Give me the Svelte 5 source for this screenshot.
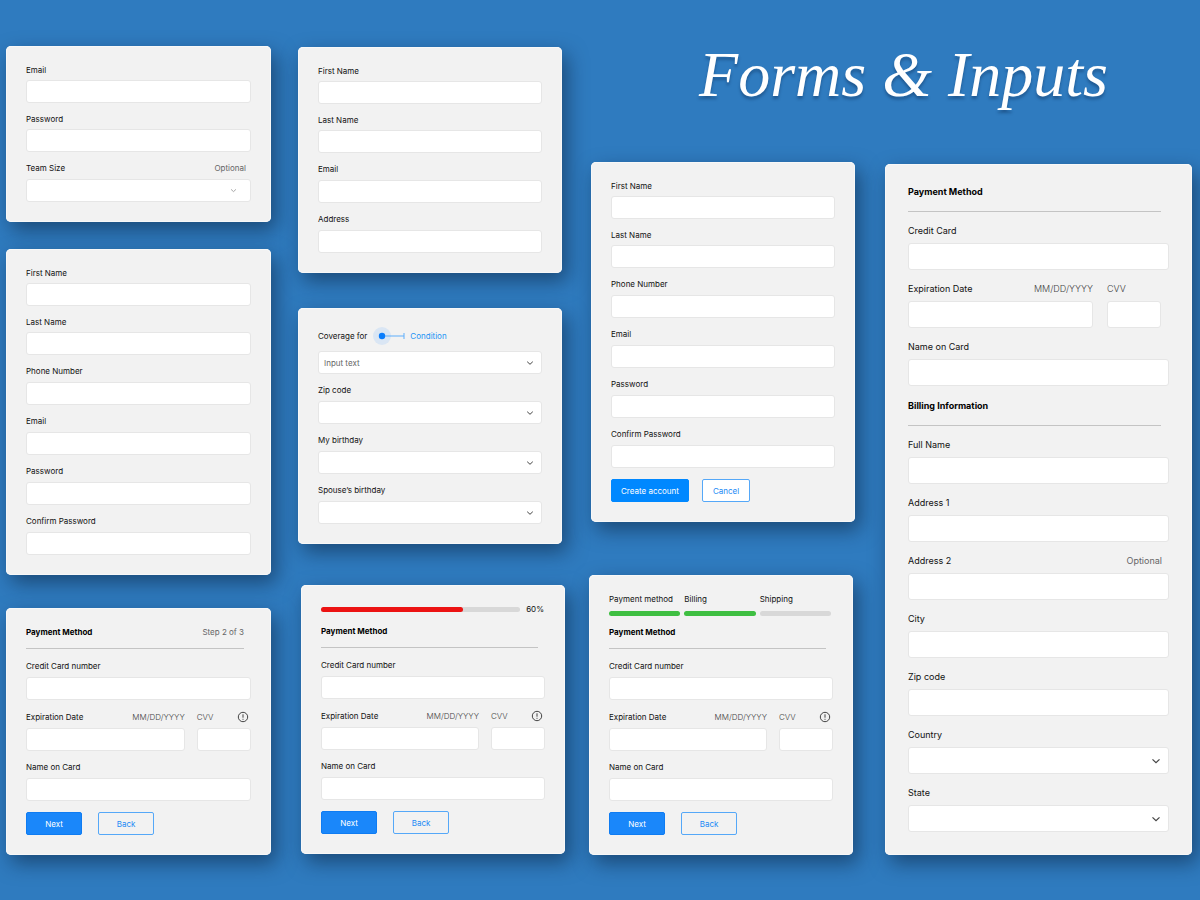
<script>
  const team = [
    { name: 'Email', type: 'email' },
    { name: 'Password', type: 'password' },
    { name: 'Team Size', select: true, hint: 'Optional', faint: true }
  ];
  const contact = [
    { name: 'First Name' },
    { name: 'Last Name' },
    { name: 'Email', type: 'email' },
    { name: 'Address' }
  ];
  const account = [
    { name: 'First Name' },
    { name: 'Last Name' },
    { name: 'Phone Number', type: 'tel' },
    { name: 'Email', type: 'email' },
    { name: 'Password', type: 'password' },
    { name: 'Confirm Password', type: 'password' }
  ];
  const coverage = [
    { name: 'Zip code', select: true },
    { name: 'My birthday', select: true },
    { name: 'Spouse’s birthday', select: true }
  ];
  const billing = [
    { name: 'Full Name' },
    { name: 'Address 1' },
    { name: 'Address 2', hint: 'Optional' },
    { name: 'City' },
    { name: 'Zip code' },
    { name: 'Country', select: true },
    { name: 'State', select: true }
  ];
  const steps = [
    { name: 'Payment method', done: true },
    { name: 'Billing', done: true },
    { name: 'Shipping', done: false }
  ];
  const progress = 71.5;

  const idOf = (prefix, name) => prefix + '-' + name.toLowerCase().replace(/[^a-z0-9]+/g, '-');
</script>

{#snippet picker(id, text, faint)}
  <div class="picker">
    <select {id}><option>{text}</option></select>
    <svg class="chevron" class:faint viewBox="0 0 8 8" aria-hidden="true">
      <path d="M1.2 2.7 L4 5.3 L6.8 2.7" />
    </svg>
  </div>
{/snippet}

{#snippet field(prefix, f)}
  {@const id = idOf(prefix, f.name)}
  <div class="field">
    <div class="caption">
      <label for={id}>{f.name}</label>
      {#if f.hint}<span class="hint">{f.hint}</span>{/if}
    </div>
    {#if f.select}
      {@render picker(id, '', f.faint)}
    {:else}
      <input {id} type={f.type ?? 'text'} />
    {/if}
  </div>
{/snippet}

{#snippet cardFields(prefix, numberLabel, info)}
  {@render field(prefix, { name: numberLabel })}
  <div class="expiry">
    <div class="field">
      <div class="caption">
        <label for="{prefix}-exp">Expiration Date</label>
        <span class="light">MM/DD/YYYY</span>
      </div>
      <input id="{prefix}-exp" type="text" />
    </div>
    <div class="field">
      <div class="caption">
        <label class="light" for="{prefix}-cvv">CVV</label>
        {#if info}
          <svg class="info" viewBox="0 0 12 12" aria-hidden="true">
            <circle cx="6" cy="6" r="4.7" />
            <path d="M6 3.3 V6.7 M6 7.8 V8.8" />
          </svg>
        {/if}
      </div>
      <input id="{prefix}-cvv" type="text" />
    </div>
  </div>
  {@render field(prefix, { name: 'Name on Card' })}
{/snippet}

{#snippet nextBack()}
  <div class="actions wide">
    <button class="primary" type="button">Next</button>
    <button class="outline" type="button">Back</button>
  </div>
{/snippet}

<main>
  <h1>Forms &amp; Inputs</h1>

  <div class="stack one">
    <form class="card list">
      {#each team as f}{@render field('team', f)}{/each}
    </form>
    <form class="card list">
      {#each account as f}{@render field('profile', f)}{/each}
    </form>
    <form class="card">
      <div class="heading">
        <h2>Payment Method</h2>
        <span class="hint">Step 2 of 3</span>
      </div>
      {@render cardFields('pay-a', 'Credit Card number', true)}
      {@render nextBack()}
    </form>
  </div>

  <div class="stack two">
    <form class="card list">
      {#each contact as f}{@render field('contact', f)}{/each}
    </form>
    <form class="card">
      <div class="field">
        <div class="caption condition">
          <label for="coverage-for">Coverage for</label>
          <svg viewBox="0 0 32 20" aria-hidden="true">
            <circle cx="9" cy="10" r="9" fill="#dae6f4" />
            <path d="M11 10 H31 M31 7 V13" fill="none" stroke="#5eaefb" />
            <circle cx="9" cy="10" r="3.2" fill="#0a7dfc" />
          </svg>
          <span>Condition</span>
        </div>
        {@render picker('coverage-for', 'Input text', false)}
      </div>
      {#each coverage as f}{@render field('coverage', f)}{/each}
    </form>
    <form class="card">
      <div class="progress">
        <div class="track"><div class="fill" style="width: {progress}%"></div></div>
        <span>60%</span>
      </div>
      <div class="heading"><h2>Payment Method</h2></div>
      {@render cardFields('pay-b', 'Credit Card number', true)}
      {@render nextBack()}
    </form>
  </div>

  <div class="stack three">
    <form class="card list">
      {#each account as f}{@render field('account', f)}{/each}
      <div class="actions">
        <button class="primary bright" type="button">Create account</button>
        <button class="outline filled" type="button">Cancel</button>
      </div>
    </form>
    <form class="card">
      <ol class="steps">
        {#each steps as s}
          <li class:done={s.done}>{s.name}</li>
        {/each}
      </ol>
      <div class="heading"><h2>Payment Method</h2></div>
      {@render cardFields('pay-c', 'Credit Card number', true)}
      {@render nextBack()}
    </form>
  </div>

  <div class="stack four">
    <form class="card large">
      <div class="heading"><h2>Payment Method</h2></div>
      {@render cardFields('full', 'Credit Card', false)}
      <div class="heading second"><h2>Billing Information</h2></div>
      {#each billing as f}{@render field('billing', f)}{/each}
    </form>
  </div>
</main>

<style>
  :global(body) {
    margin: 0;
    background: #2f7bbf;
  }
  main {
    box-sizing: border-box;
    min-height: 100vh;
    display: grid;
    grid-template-columns: 268fr 267fr 272fr 307fr;
    grid-template-rows: auto 1fr;
    column-gap: 24px;
    padding: 46px 8px 45px 6px;
    font-family: Inter, sans-serif;
    font-size: 8px;
    line-height: 16px;
    color: #111;
  }
  h1 {
    grid-column: 3 / 5;
    grid-row: 1;
    margin: 0 0 58px;
    padding-left: 26px;
    text-align: center;
    font: italic 64px/58px "Liberation Serif", serif;
    color: #fff;
    text-shadow: 0 3px 3px rgba(10, 40, 80, 0.4);
  }
  h2 {
    margin: 0;
    font-size: inherit;
    font-weight: 700;
    color: #000;
  }

  .stack {
    display: flex;
    flex-direction: column;
    align-items: flex-start;
  }
  .stack > .card {
    width: calc(100% - 3px);
  }
  .stack > .card:nth-child(n + 2):last-child {
    margin-top: 6px;
  }
  .one {
    grid-column: 1;
    grid-row: 1 / 3;
    gap: 27px;
  }
  .two {
    grid-column: 2;
    grid-row: 1 / 3;
    gap: 35px;
    padding-top: 1px;
  }
  .two > .card:last-child {
    align-self: flex-end;
  }
  .three {
    grid-column: 3;
    grid-row: 2;
    gap: 47px;
    padding-right: 6px;
  }
  .three > .card {
    width: calc(100% - 2px);
  }
  .three > .card:first-child {
    align-self: flex-end;
  }
  .four {
    grid-column: 4;
    grid-row: 2;
    padding-top: 2px;
  }
  .four > .card {
    width: 100%;
  }

  .card {
    box-sizing: border-box;
    display: flex;
    flex-direction: column;
    gap: 8px;
    padding: 16px 20px 20px;
    border-radius: 5px;
    background: #f2f2f2;
    box-shadow: inset 0 0 0 1px #f8f8f8, 5px 8px 20px rgba(8, 25, 50, 0.5);
  }

  .field {
    display: flex;
    flex-direction: column;
    gap: 3px;
    min-width: 0;
  }
  .list > .field:nth-child(-n + 2) {
    gap: 2px;
  }
  .caption {
    display: flex;
    justify-content: space-between;
    align-items: center;
    height: 16px;
  }
  .hint {
    padding-right: 5px;
    color: #666;
  }
  .light {
    font-weight: 300;
    color: #444;
  }
  input,
  select {
    box-sizing: border-box;
    width: 100%;
    height: 23px;
    margin: 0;
    padding: 0 5px;
    border: 1px solid #e6e6e6;
    border-radius: 3px;
    background: #fff;
    font: inherit;
    color: #666;
    appearance: none;
  }
  .picker {
    display: grid;
    align-items: center;
  }
  .picker > * {
    grid-area: 1 / 1;
  }
  .chevron {
    justify-self: end;
    width: 8px;
    height: 8px;
    margin-right: 8px;
    fill: none;
    stroke: #444;
    stroke-width: 1;
    pointer-events: none;
  }
  .chevron.faint {
    width: 7px;
    height: 7px;
    margin-right: 14px;
    stroke: #999;
  }

  .condition {
    justify-content: flex-start;
    height: 24px;
  }
  .condition svg {
    width: 32px;
    height: 20px;
    margin: 0 5px 0 6px;
  }
  .condition span {
    color: #1b93f5;
  }

  .heading {
    display: flex;
    justify-content: space-between;
    margin: 0 7px 1px 0;
    padding-bottom: 8px;
    border-bottom: 1px solid #c4c4c4;
  }
  .heading .hint {
    padding-right: 0;
  }
  .expiry {
    display: grid;
    grid-template-columns: 158fr 54fr;
    gap: 12px;
    margin-top: 1px;
  }
  .info {
    width: 12px;
    height: 12px;
    margin-right: 2px;
    fill: none;
    stroke: #444;
    stroke-width: 1;
  }

  .actions {
    display: flex;
    gap: 13px;
    margin-top: 3px;
  }
  .actions.wide {
    gap: 16px;
  }
  button {
    box-sizing: border-box;
    height: 23px;
    margin: 0;
    padding: 0 9px;
    border: 1px solid #0f7cf2;
    border-radius: 2px;
    font: inherit;
    cursor: pointer;
  }
  .wide button {
    width: 56px;
  }
  .primary {
    background: #1a87fa;
    color: #fff;
  }
  .primary.bright {
    border-color: #08f;
    background: #08f;
  }
  .outline {
    padding: 0 10px;
    border-color: #55a8f8;
    background: transparent;
    color: #1b8af5;
  }
  .outline.filled {
    background: #fff;
  }

  .progress {
    display: flex;
    align-items: center;
    gap: 6px;
    margin: 0 1px -2px 0;
  }
  .track {
    flex: 1;
    height: 5px;
    border-radius: 3px;
    background: #d8d8d8;
  }
  .fill {
    height: 100%;
    border-radius: 3px;
    background: #ec1313;
  }
  .steps {
    display: grid;
    grid-template-columns: repeat(3, 1fr);
    gap: 4px;
    margin: 0 2px 0 0;
    padding: 0;
    list-style: none;
    white-space: nowrap;
  }
  .steps li::after {
    content: "";
    display: block;
    height: 5px;
    margin-top: 4px;
    border-radius: 3px;
    background: #d8d8d8;
  }
  .steps .done::after {
    background: #3fbf42;
  }

  .large {
    gap: 11px;
    padding: 20px 23px 23px;
    font-size: 9px;
  }
  .large .field {
    gap: 4px;
  }
  .large input,
  .large select {
    height: 27px;
  }
  .large .heading {
    margin: 0 8px 0 0;
    padding-bottom: 11px;
  }
  .large .heading.second {
    margin-top: 1px;
  }
  .large .expiry {
    grid-template-columns: 185fr 54fr;
    gap: 14px;
    margin: 0 8px 0 0;
  }
  .large .hint {
    padding-right: 7px;
  }
  .large .chevron {
    width: 10px;
    height: 10px;
  }
</style>
